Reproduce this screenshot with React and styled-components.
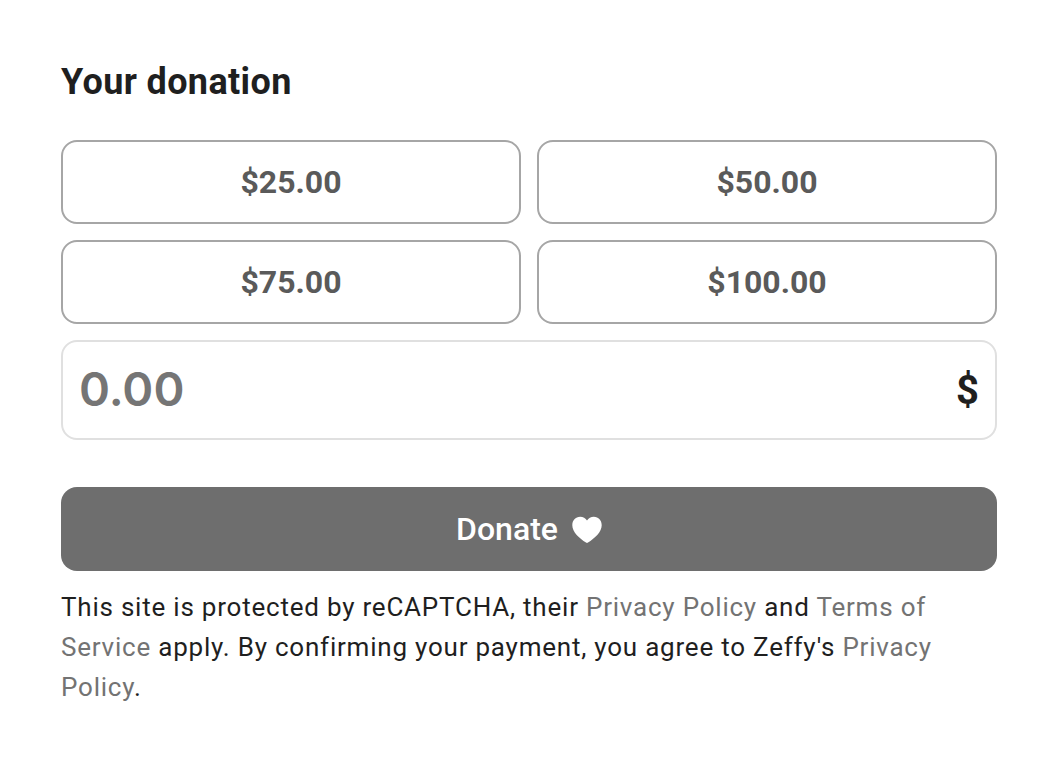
import React, { useState } from 'react';
import styled, { createGlobalStyle } from 'styled-components';

const GlobalStyle = createGlobalStyle`
    * {
        box-sizing: border-box;
    }

    body {
        margin: 0;
        background: #fff;
        color: #1f1f1f;
        font-family: Roboto, sans-serif;
        -webkit-font-smoothing: antialiased;
    }
`;

const Form = styled.form`
    padding: 60px 66px 50px 61px;
`;

const Title = styled.h1`
    margin: 0 0 36px;
    font-size: 36px;
    line-height: 44px;
    font-weight: 700;
    letter-spacing: 0.01em;
`;

const AmountGrid = styled.div`
    display: grid;
    grid-template-columns: 1fr 1fr;
    gap: 16px;
`;

const AmountButton = styled.button`
    height: 84px;
    border: 2px solid ${props => (props.$selected ? '#1f1f1f' : '#a6a6a6')};
    border-radius: 16px;
    background: #fff;
    color: #5a5a5a;
    font-family: inherit;
    font-size: 32px;
    font-weight: 700;
    cursor: pointer;
`;

const AmountField = styled.div`
    display: flex;
    align-items: center;
    height: 100px;
    margin: 16px 0 47px;
    padding: 0 16px;
    border: 2px solid #e0e0e0;
    border-radius: 16px;
`;

const AmountInput = styled.input`
    flex: 1;
    min-width: 0;
    height: 64px;
    padding: 0 0 4px;
    border: 0;
    outline: 0;
    background: transparent;
    color: #1f1f1f;
    font-family: Inter, sans-serif;
    font-size: 47px;
    font-weight: 600;

    &::placeholder {
        color: #757575;
        opacity: 1;
    }
`;

const Currency = styled.label`
    font-size: 40px;
    font-weight: 700;
`;

const DonateButton = styled.button`
    display: flex;
    align-items: center;
    justify-content: center;
    gap: 14px;
    width: 100%;
    height: 84px;
    border: 0;
    border-radius: 16px;
    background: #6e6e6e;
    color: #fff;
    font-family: inherit;
    font-size: 32px;
    font-weight: 500;
    cursor: pointer;
`;

const Legal = styled.p`
    margin: 16px 0 0;
    font-size: 26px;
    line-height: 40px;
    letter-spacing: 0.03em;
`;

const LegalLink = styled.a`
    color: #737373;
    text-decoration: none;
`;

const amounts = [25, 50, 75, 100];

function Heart() {
    return (
        <svg width="30" height="28" viewBox="0 0 30 28" fill="currentColor" aria-hidden="true">
            <path d="M15 5.6C16.4 3.2 19 1.8 21.8 1.8C26.6 1.8 29.7 5.4 29.7 10.2C29.7 17 22.5 23.4 16 27.6C15.3 28 14.7 28 14 27.6C7.5 23.4 0.3 17 0.3 10.2C0.3 5.4 3.4 1.8 8.2 1.8C11 1.8 13.6 3.2 15 5.6Z" />
        </svg>
    );
}

function App() {
    const [amount, setAmount] = useState('');

    return (
        <>
            <GlobalStyle />
            <Form onSubmit={e => e.preventDefault()}>
                <Title>Your donation</Title>
                <AmountGrid>
                    {amounts.map(value => (
                        <AmountButton
                            key={value}
                            type="button"
                            $selected={amount === value.toFixed(2)}
                            onClick={() => setAmount(value.toFixed(2))}
                        >
                            {`$${value.toFixed(2)}`}
                        </AmountButton>
                    ))}
                </AmountGrid>
                <AmountField>
                    <AmountInput
                        id="amount"
                        inputMode="decimal"
                        placeholder="0.00"
                        value={amount}
                        onChange={e => setAmount(e.target.value)}
                    />
                    <Currency htmlFor="amount">$</Currency>
                </AmountField>
                <DonateButton type="submit">
                    Donate
                    <Heart />
                </DonateButton>
                <Legal>
                    This site is protected by reCAPTCHA, their <LegalLink href="#privacy">Privacy Policy</LegalLink> and{' '}
                    <LegalLink href="#terms">Terms of Service</LegalLink> apply. By confirming your payment, you agree to
                    Zeffy's <LegalLink href="#zeffy-privacy">Privacy Policy</LegalLink>.
                </Legal>
            </Form>
        </>
    );
}

export default App;
